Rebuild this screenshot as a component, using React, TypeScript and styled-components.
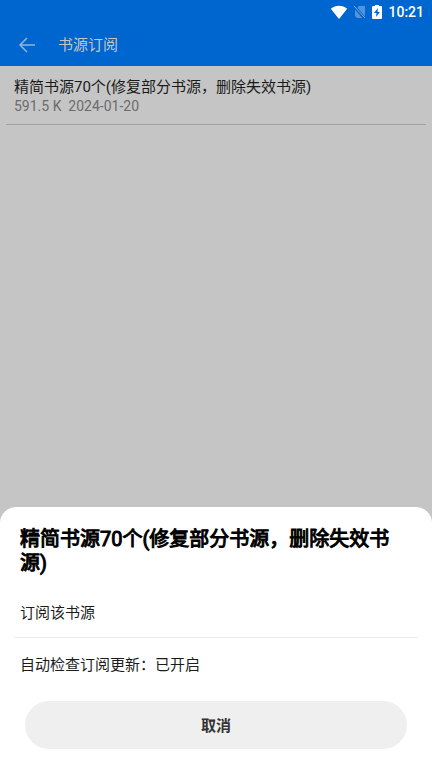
import React from "react";
import styled, { createGlobalStyle } from "styled-components";

const GlobalStyle = createGlobalStyle`
  * { box-sizing: border-box; }
  body { margin: 0; background: #c5c5c5; font-family: Roboto, "Noto Sans CJK SC", sans-serif; }
  button, h1, h2, p { font: inherit; margin: 0; padding: 0; }
  button { border: 0; background: none; color: inherit; cursor: pointer; }
`;

const Screen = styled.div`
  min-height: 100vh;
  display: flex;
  flex-direction: column;
  background: #c5c5c5;
`;

const Header = styled.header`
  background: #0066cf;
`;

const StatusBar = styled.div`
  height: 24px;
  padding-right: 8px;
  display: flex;
  align-items: center;
  justify-content: flex-end;
  color: #fff;
  font-size: 14px;
  font-weight: 500;
  svg { display: block; }
`;

const StatusIcons = styled.div`
  display: flex;
  align-items: center;
  gap: 6px;
  margin-right: 6px;
`;

const Toolbar = styled.div`
  height: 42px;
  padding-left: 16px;
  display: flex;
  align-items: center;
  gap: 20px;
  color: #c5c5c5;
`;

const BackButton = styled.button`
  width: 22px;
  height: 22px;
  color: #94b4d2;
  svg { display: block; }
`;

const PageTitle = styled.h1`
  font-size: 15px;
  line-height: 20px;
  font-weight: 400;
`;

const List = styled.main`
  flex: 1;
  padding: 0 6px;
`;

const SourceRow = styled.button`
  display: block;
  width: 100%;
  padding: 11px 8px 9px;
  border-bottom: 1px solid #a0a0a0;
  text-align: left;
`;

const SourceName = styled.span`
  display: block;
  font-size: 15px;
  line-height: 20px;
  color: #1a1a1a;
`;

const SourceMeta = styled.span`
  display: block;
  font-size: 14px;
  line-height: 18px;
  color: #6c6c6c;
  white-space: pre;
`;

const Sheet = styled.section`
  padding: 20px 14px 19px;
  border-radius: 16px 16px 0 0;
  background: #fff;
  color: #1c1c1c;
`;

const SheetTitle = styled.h2`
  padding: 0 6px;
  font-size: 20px;
  line-height: 24px;
  font-weight: 400;
  color: #000;
  -webkit-text-stroke: 1px #000;
`;

const Options = styled.div`
  margin-top: 10px;
`;

const Option = styled.button`
  display: block;
  width: 100%;
  height: 52px;
  padding: 0 6px;
  font-size: 15px;
  text-align: left;
  & + & { border-top: 1px solid #ececec; }
`;

const CancelButton = styled.button`
  display: block;
  width: calc(100% - 22px);
  height: 48px;
  margin: 12px 11px 0;
  padding-bottom: 2px;
  border-radius: 24px;
  background: #efefef;
  color: #333;
  font-size: 15px;
  font-weight: 700;
`;

export default function App() {
  return (
    <Screen>
      <GlobalStyle />
      <Header>
        <StatusBar>
          <StatusIcons>
            <svg width="18" height="16" viewBox="0 0 18 16" fill="#fff">
              <path d="M9 15 0.800 4.800C5.500 0.800 12.500 0.800 17.200 4.800Z" />
            </svg>
            <svg width="12" height="14" viewBox="0 0 12 14">
              <path d="M5 1H11V13H3L1 11V5Z" fill="#5592da" />
              <path d="M0 1 11 14" stroke="#0066cf" strokeWidth="3" />
              <path d="M0 1 11 13" stroke="#78a9e2" strokeWidth="1" />
            </svg>
            <svg width="10" height="14" viewBox="0 0 10 14">
              <path d="M3 0H7V1H9Q10 1 10 2V13Q10 14 9 14H1Q0 14 0 13V2Q0 1 1 1H3Z" fill="#fff" />
              <path d="M6 3 2 8H4.500L4 12 8 7H5.500Z" fill="#0066cf" />
            </svg>
          </StatusIcons>
          <span>10:21</span>
        </StatusBar>
        <Toolbar>
          <BackButton aria-label="返回">
            <svg
              width="22"
              height="22"
              viewBox="0 0 22 22"
              fill="none"
              stroke="currentColor"
              strokeWidth="1.5"
            >
              <path d="M19 11H4.500M11 4 4 11 11 18" />
            </svg>
          </BackButton>
          <PageTitle>书源订阅</PageTitle>
        </Toolbar>
      </Header>
      <List>
        <SourceRow>
          <SourceName>精简书源70个(修复部分书源，删除失效书源)</SourceName>
          <SourceMeta>{"591.5 K  2024-01-20"}</SourceMeta>
        </SourceRow>
      </List>
      <Sheet role="dialog" aria-labelledby="sheet-title">
        <SheetTitle id="sheet-title">精简书源70个(修复部分书源，删除失效书源)</SheetTitle>
        <Options>
          <Option>订阅该书源</Option>
          <Option>自动检查订阅更新：已开启</Option>
        </Options>
        <CancelButton>取消</CancelButton>
      </Sheet>
    </Screen>
  );
}
